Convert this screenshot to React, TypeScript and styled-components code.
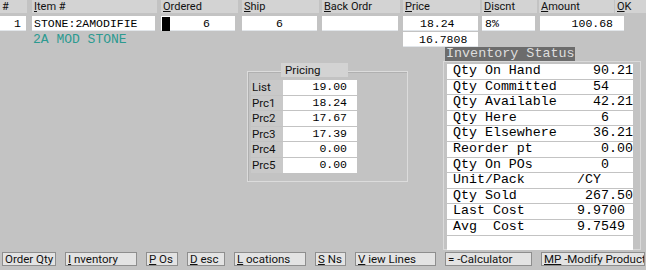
import React from "react";
import styled, { createGlobalStyle } from "styled-components";

const GlobalStyle = createGlobalStyle`
  html, body { margin: 0; padding: 0; }
  body {
    background: #c3c3c3;
    width: 646px;
    height: 270px;
    overflow: hidden;
    font-family: Roboto, "Liberation Sans", sans-serif;
  }
`;

const MONO = `"Liberation Mono", "DejaVu Sans Mono", monospace`;

const Screen = styled.div`
  width: 646px;
  height: 270px;
  display: flex;
  flex-direction: column;
  background: #c3c3c3;
`;

const HeaderRow = styled.div`
  display: flex;
  height: 13px;
  margin-bottom: 3px;
`;

const HeaderCell = styled.div<{ $w: number; $ml: number }>`
  width: ${(p) => p.$w}px;
  margin-left: ${(p) => p.$ml}px;
  height: 13px;
  background: #d3d3d3;
  font-size: 11px;
  line-height: 13px;
  color: #111;
  padding-left: 2px;
  box-sizing: border-box;
  white-space: nowrap;
  u { text-decoration-thickness: 1px; text-underline-offset: 1px; }
`;

const FieldRow = styled.div`
  display: flex;
  height: 15px;
`;

const Field = styled.div<{
  $w: number;
  $ml: number;
  $align?: "left" | "right" | "center";
  $pl?: number;
  $pr?: number;
}>`
  width: ${(p) => p.$w}px;
  margin-left: ${(p) => p.$ml}px;
  height: 15px;
  background: #ffffff;
  box-shadow: inset 0 -1px 0 #e2e6ea;
  display: flex;
  align-items: center;
  justify-content: ${(p) =>
    p.$align === "right" ? "flex-end" : p.$align === "center" ? "center" : "flex-start"};
  padding-left: ${(p) => p.$pl ?? 0}px;
  padding-right: ${(p) => p.$pr ?? 0}px;
  box-sizing: border-box;
  font-family: ${MONO};
  font-size: 11.5px;
  color: #000;
  white-space: pre;
`;

const Cursor = styled.span`
  width: 8px;
  height: 14px;
  background: #000;
  margin-right: auto;
`;

const SubRow = styled.div`
  display: flex;
  height: 15px;
  margin-top: 1px;
`;

const Description = styled.div`
  width: 200px;
  margin-left: 33px;
  font-family: ${MONO};
  font-size: 13px;
  line-height: 15px;
  color: #2c9a90;
  white-space: pre;
`;

const Body = styled.div`
  display: flex;
  align-items: flex-start;
  height: 203px;
`;

const PricingGroup = styled.div`
  position: relative;
  margin-left: 247px;
  margin-top: 24px;
  width: 161px;
  height: 111px;
  box-sizing: border-box;
  border: 1px solid #dcdcdc;
  box-shadow: inset 1px 1px 0 #b0b0b0;
  padding: 8px 0 0 3px;
`;

const Legend = styled.div`
  position: absolute;
  top: -9px;
  left: 33px;
  width: 67px;
  height: 14px;
  background: #d3d3d3;
  font-size: 11.5px;
  line-height: 14px;
  padding-left: 4px;
  box-sizing: border-box;
  color: #111;
`;

const PriceGrid = styled.div`
  display: grid;
  grid-template-columns: 32px 74px;
  grid-auto-rows: 14.6px;
  row-gap: 1px;
`;

const PriceLabel = styled.div`
  font-size: 11.5px;
  line-height: 14.6px;
  padding-left: 1px;
  color: #111;
  background: #c9c9c9;
`;

const PriceValue = styled.div`
  background: #fff;
  font-family: ${MONO};
  font-size: 11.5px;
  line-height: 14.6px;
  text-align: right;
  padding-right: 10px;
  color: #000;
`;

const InventoryPanel = styled.div`
  margin-left: 35px;
  width: 198px;
  display: flex;
  flex-direction: column;
`;

const InvTitle = styled.div`
  margin-left: 2px;
  width: 130px;
  height: 14px;
  background: #6c6c6c;
  color: #dedede;
  font-family: ${MONO};
  font-size: 13.4px;
  line-height: 14px;
  padding-left: 1px;
  box-sizing: border-box;
  white-space: pre;
`;

const InvFrame = styled.div`
  height: 189px;
  box-sizing: border-box;
  border: 1px solid #dadada;
  padding: 2px 7px 0 3px;
  display: grid;
  grid-auto-rows: 14.6px;
  row-gap: 1px;
  align-content: start;
`;

const InvRow = styled.div`
  background: #fff;
  display: grid;
  grid-template-columns: 124px 1fr;
  padding-left: 6px;
  font-family: ${MONO};
  font-size: 13.3px;
  line-height: 14.6px;
  color: #000;
  white-space: pre;
  overflow: hidden;
`;

const ButtonBar = styled.div`
  display: flex;
  gap: 9px;
  padding-left: 2px;
  margin-top: 2px;
`;

const Button = styled.div<{ $w: number }>`
  width: ${(p) => p.$w}px;
  flex: none;
  height: 14px;
  box-sizing: border-box;
  background: #e3e3e3;
  border: 1px solid #8e8e8e;
  font-size: 11.5px;
  line-height: 12px;
  padding-left: 2px;
  color: #111;
  white-space: pre;
  overflow: hidden;
  u { text-decoration-thickness: 1px; text-underline-offset: 1px; }
`;

const headers: { key: string; u?: string; rest: string; w: number; ml: number }[] = [
  { key: "num", rest: "#", w: 27, ml: 0 },
  { key: "item", u: "I", rest: "tem #", w: 125, ml: 5 },
  { key: "ord", u: "O", rest: "rdered", w: 77, ml: 4 },
  { key: "ship", u: "S", rest: "hip", w: 77, ml: 4 },
  { key: "bo", u: "B", rest: "ack Ordr", w: 78, ml: 3 },
  { key: "price", u: "P", rest: "rice", w: 77, ml: 3 },
  { key: "disc", u: "D", rest: "iscnt", w: 55, ml: 2 },
  { key: "amt", u: "A", rest: "mount", w: 75, ml: 2 },
  { key: "ok", u: "O", rest: "K", w: 31, ml: 1 },
];

const pricing = [
  ["List", "19.00"],
  ["Prc1", "18.24"],
  ["Prc2", "17.67"],
  ["Prc3", "17.39"],
  ["Prc4", "0.00"],
  ["Prc5", "0.00"],
];

const inventory = [
  ["Qty On Hand", "  90.21"],
  ["Qty Committed", "  54"],
  ["Qty Available", "  42.21"],
  ["Qty Here", "   6"],
  ["Qty Elsewhere", "  36.21"],
  ["Reorder pt", "   0.00"],
  ["Qty On POs", "   0"],
  ["Unit/Pack", "/CY"],
  ["Qty Sold", " 267.50"],
  ["Last Cost", "9.9700"],
  ["Avg  Cost", "9.7549"],
  ["", ""],
];

const buttons: { u?: string; rest: string; w: number }[] = [
  { rest: "Order Qty", w: 54 },
  { u: "I", rest: " nventory", w: 72 },
  { u: "P", rest: " Os", w: 32 },
  { u: "D", rest: " esc", w: 38 },
  { u: "L", rest: " ocations", w: 72 },
  { u: "S", rest: " Ns", w: 31 },
  { u: "V", rest: " iew Lines", w: 81 },
  { rest: "= -Calculator", w: 87 },
  { u: "MP", rest: " -Modify Product", w: 104 },
];

export default function App() {
  return (
    <>
      <GlobalStyle />
      <Screen>
        <HeaderRow>
          {headers.map((h) => (
            <HeaderCell key={h.key} $w={h.w} $ml={h.ml}>
              {h.u && <u>{h.u}</u>}
              {h.rest}
            </HeaderCell>
          ))}
        </HeaderRow>
        <FieldRow>
          <Field $w={26} $ml={0} $align="right" $pr={5}>1</Field>
          <Field $w={123} $ml={6} $pl={2}>STONE:2AMODIFIE</Field>
          <Field $w={74} $ml={6} $align="right" $pr={25} $pl={1}>
            <Cursor />6
          </Field>
          <Field $w={75} $ml={7} $align="center">6</Field>
          <Field $w={76} $ml={5} />
          <Field $w={75} $ml={5} $pl={17}>18.24</Field>
          <Field $w={53} $ml={4} $pl={3}>8%</Field>
          <Field $w={84} $ml={5} $align="right" $pr={11}>100.68</Field>
        </FieldRow>
        <SubRow>
          <Description>2A MOD STONE</Description>
          <Field $w={75} $ml={170} $pl={16}>16.7808</Field>
        </SubRow>
        <Body>
          <PricingGroup>
            <Legend>Pricing</Legend>
            <PriceGrid>
              {pricing.map(([label, value]) => (
                <React.Fragment key={label}>
                  <PriceLabel>{label}</PriceLabel>
                  <PriceValue>{value}</PriceValue>
                </React.Fragment>
              ))}
            </PriceGrid>
          </PricingGroup>
          <InventoryPanel>
            <InvTitle>Inventory Status</InvTitle>
            <InvFrame>
              {inventory.map(([label, value], i) => (
                <InvRow key={i}>
                  <span>{label}</span>
                  <span>{value}</span>
                </InvRow>
              ))}
            </InvFrame>
          </InventoryPanel>
        </Body>
        <ButtonBar>
          {buttons.map((b, i) => (
            <Button key={i} $w={b.w}>
              {b.u && <u>{b.u}</u>}
              {b.rest}
            </Button>
          ))}
        </ButtonBar>
      </Screen>
    </>
  );
}
